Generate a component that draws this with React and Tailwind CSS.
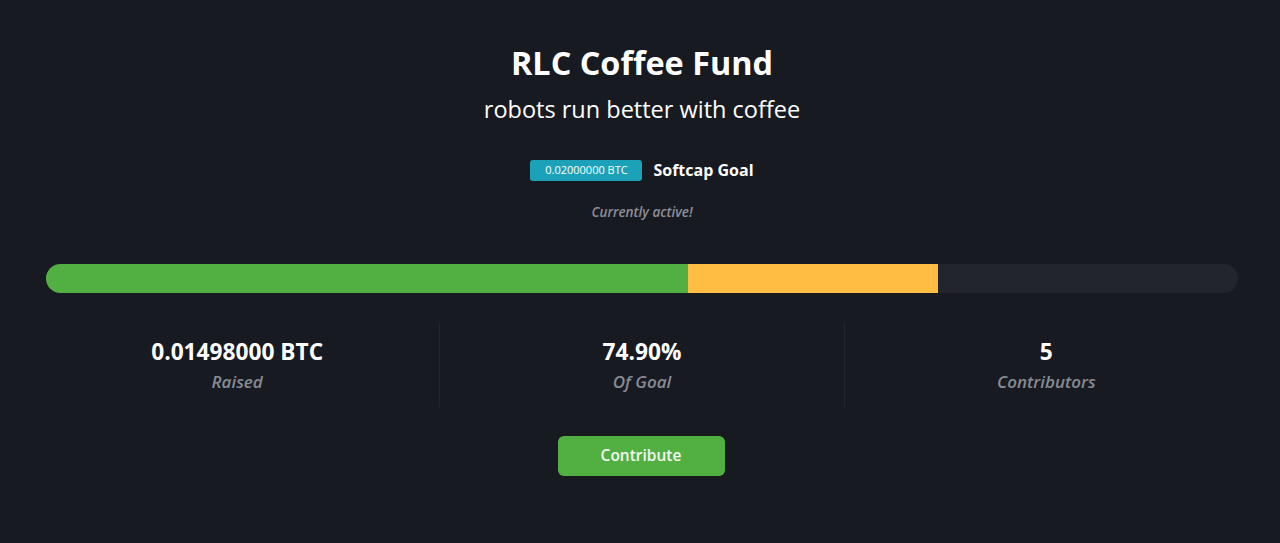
export default function App() {
  const stats = [
    { value: "0.01498000 BTC", label: "Raised" },
    { value: "74.90%", label: "Of Goal" },
    { value: "5", label: "Contributors" },
  ];

  return (
    <div
      className="w-full h-[543px] bg-[#171a21] text-white flex flex-col items-center"
      style={{ fontFamily: '"Open Sans", "Noto Sans", sans-serif' }}
    >
      {/* Header */}
      <div className="pl-[4px] flex flex-col items-center">
        <h1 className="mt-[40px] text-[32.4px] leading-[44px] font-bold">RLC Coffee Fund</h1>
        <p className="mt-[10px] text-[23.5px] leading-[30px]">robots run better with coffee</p>

        <div className="mt-[34px] flex items-center gap-[11px]">
          <span className="w-[112px] h-[21px] rounded-[3px] bg-[#1ca2b8] text-[11px] flex items-center justify-center">
            0.02000000 BTC
          </span>
          <span className="text-[16px] font-bold">Softcap Goal</span>
        </div>

        <p className="mt-[20px] text-[13.5px] leading-[20px] italic font-semibold text-[#8b8f97]">Currently active!</p>
      </div>

      {/* Progress */}
      <div className="mt-[42px] w-full pl-[46px] pr-[42px]">
        <div className="h-[29px] w-full rounded-full bg-[#22252d] flex overflow-hidden">
          <div className="w-[642px] bg-[#52b043]" />
          <div className="w-[250px] bg-[#ffbd44]" />
        </div>
      </div>

      {/* Stats */}
      <div className="mt-[30px] w-full pl-[35px] pr-[32px] grid grid-cols-3">
        {stats.map((s, i) => (
          <div
            key={s.label}
            className={`h-[84px] pt-[14px] flex flex-col items-center ${
              i > 0 ? "border-l border-[#22252c]" : ""
            }`}
          >
            <span className="text-[22.7px] leading-[30px] font-bold">{s.value}</span>
            <span className="mt-[3px] text-[17px] leading-[24px] italic font-semibold text-[#868b94]">{s.label}</span>
          </div>
        ))}
      </div>

      <button className="mt-[29px] ml-[2px] w-[167px] h-[40px] rounded-[6px] bg-[#52b043] text-[15.5px] font-semibold text-[#f3f8f1]">
        Contribute
      </button>
    </div>
  );
}
